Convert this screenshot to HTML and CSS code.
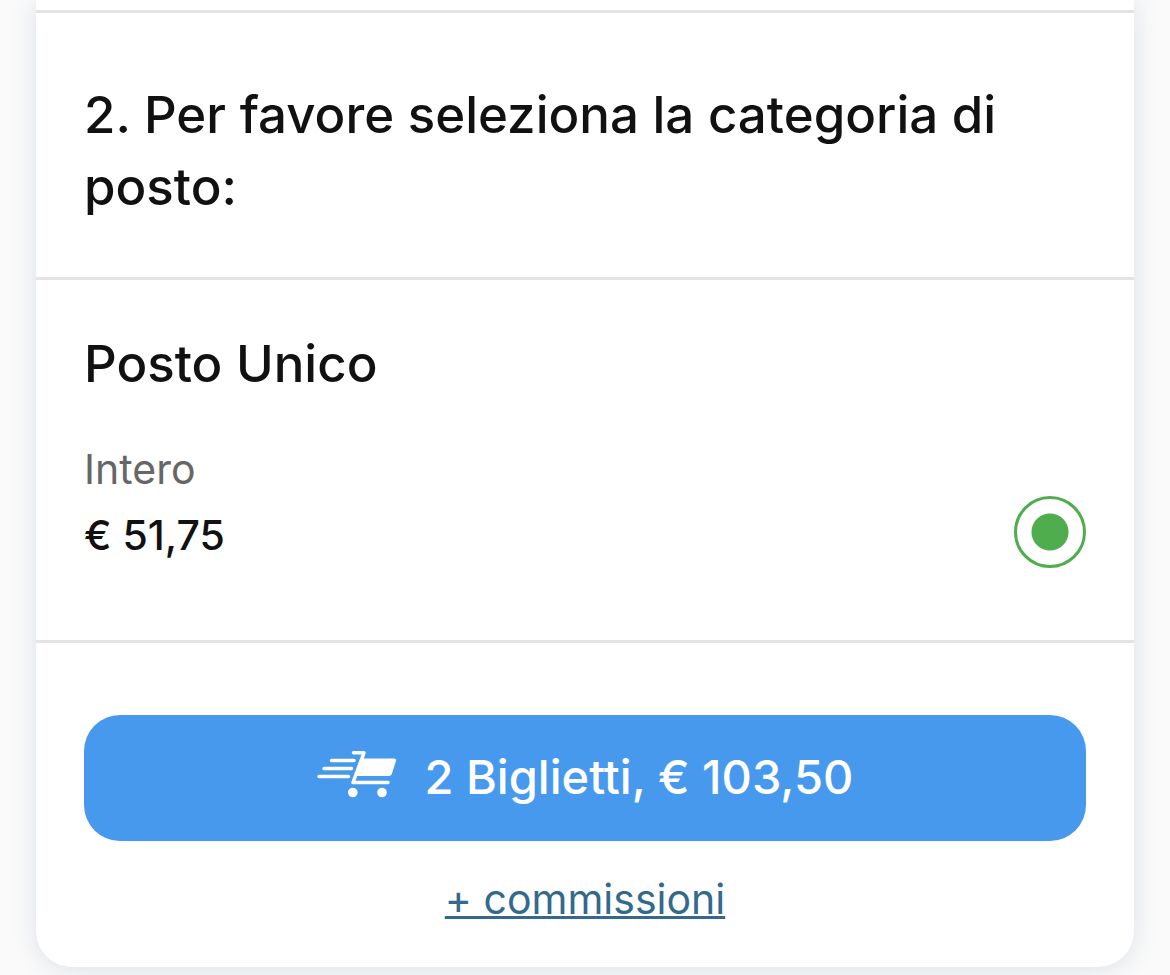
FILE: index.html
```html
<!DOCTYPE html>
<html lang="it">
<head>
  <meta charset="UTF-8">
  <meta name="viewport" content="width=device-width, initial-scale=1.0">
  <title>Biglietti</title>
  <link rel="stylesheet" href="styles.css">
</head>
<body>

<form class="card">
  <div class="card-top"></div>

  <!-- Step title -->
  <div class="step">
    <h2>2. Per favore seleziona la categoria di posto:</h2>
  </div>

  <!-- Seat category -->
  <div class="category">
    <h3>Posto Unico</h3>
    <div class="ticket">
      <label for="intero">
        <span class="ticket-type">Intero</span>
        <span class="ticket-price">€ 51,75</span>
      </label>
      <input type="radio" id="intero" name="ticket" class="ticket-radio" checked>
    </div>
  </div>

  <!-- Checkout -->
  <div class="checkout">
    <button type="button" class="cart-btn">
      <svg class="cart-icon" viewBox="0 0 80 48" aria-hidden="true">
        <g fill="none" stroke="#fff" stroke-width="3.500" stroke-linecap="round" stroke-linejoin="round">
          <path d="M14.500 10.500H37M7 18.500H34.500M2 26.500H31.500"/>
          <path d="M36.500 2.800H47L36 32.500H71"/>
        </g>
        <path d="M45 8.500H77Q79.800 8.500 79 11L74.800 24Q74 26 72 26H38L43 9Z" fill="#fff"/>
        <circle cx="35.800" cy="42.500" r="4.800" fill="#fff"/>
        <circle cx="65" cy="42.500" r="4.800" fill="#fff"/>
      </svg>
      <span>2 Biglietti, € 103,50</span>
    </button>
    <a href="#commissioni" class="fees">+ commissioni</a>
  </div>
</form>

</body>
</html>
```
FILE: styles.css
```css
* {
  margin: 0;
  padding: 0;
  box-sizing: border-box;
}

body {
  font-family: Inter, "Liberation Sans", sans-serif;
  background-color: #fafafa;
  color: #111;
  padding: 0 36px 8px;
}

.card {
  background-color: #fff;
  border-radius: 0 0 36px 36px;
  box-shadow: 0 2px 24px rgba(50, 80, 130, 0.15);
}

.card-top {
  height: 13px;
  border-bottom: 3px solid #e4e4e4;
}

.step {
  padding: 66px 48px 54px;
  border-bottom: 3px solid #e4e4e4;
}

h2,
h3 {
  font-size: 51px;
  font-weight: 500;
  line-height: 72px;
}

.category {
  padding: 48px 48px 72px;
  border-bottom: 3px solid #e4e4e4;
}

.ticket {
  display: flex;
  justify-content: space-between;
  align-items: flex-end;
  margin-top: 36px;
  font-size: 41px;
  line-height: 66px;
}

.ticket-type,
.ticket-price {
  display: block;
}

.ticket-type {
  color: #666;
}

.ticket-price {
  font-weight: 500;
}

.ticket-radio {
  appearance: none;
  width: 72px;
  height: 72px;
  border: 3px solid #4fad4d;
  border-radius: 50%;
  background: radial-gradient(circle, #4fad4d 18px, #fff 19px);
}

.checkout {
  display: flex;
  flex-direction: column;
  align-items: center;
  padding: 72px 48px 35px;
}

.cart-btn {
  display: flex;
  justify-content: center;
  align-items: center;
  gap: 28px;
  width: 100%;
  height: 126px;
  padding-bottom: 4px;
  border: none;
  border-radius: 36px;
  background-color: #4799ed;
  color: #fff;
  font-family: inherit;
  font-size: 47px;
  font-weight: 500;
  cursor: pointer;
}

.cart-icon {
  width: 80px;
  height: 52px;
  padding-bottom: 4px;
}

.fees {
  margin-top: 25px;
  color: #336a8c;
  font-size: 41px;
  line-height: 66px;
  text-decoration: underline;
  text-decoration-thickness: 3px;
  text-underline-offset: 2px;
}
```
